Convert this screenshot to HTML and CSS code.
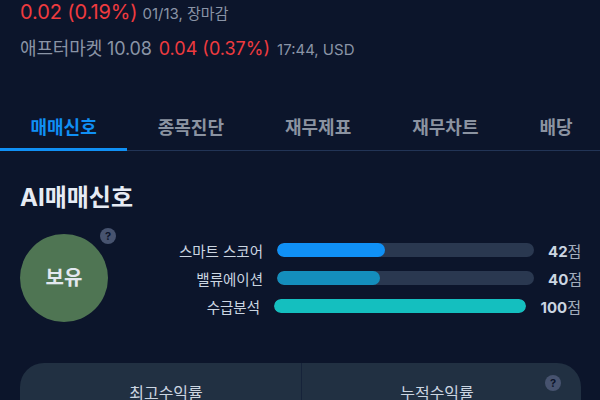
FILE: index.html
```html
<!DOCTYPE html>
<html lang="ko">

<head>
  <meta charset="UTF-8">
  <title>AI매매신호</title>
  <link rel="stylesheet" href="styles.css">
</head>

<body>
  <div class="quote">
    <div class="quote-line close">
      <span class="up big">0.02 (0.19%)</span>
      <span class="meta">01/13, 장마감</span>
    </div>
    <div class="quote-line after">
      <span class="after-label">애프터마켓 10.08</span>
      <span class="up">0.04 (0.37%)</span>
      <span class="meta">17:44, USD</span>
    </div>
  </div>

  <div class="tabs">
    <div class="tab active">매매신호</div>
    <div class="tab">종목진단</div>
    <div class="tab">재무제표</div>
    <div class="tab">재무차트</div>
    <div class="tab">배당</div>
  </div>

  <div class="section">
    <h2>AI매매신호</h2>
    <div class="signal">
      <div class="badge">
        보유
        <span class="help help-badge">?</span>
      </div>
      <div class="scores">
        <div class="score-row">
          <span class="score-label">스마트 스코어</span>
          <div class="track"><div class="fill fill-blue" style="width: 42%"></div></div>
          <span class="score-value"><strong>42</strong>점</span>
        </div>
        <div class="score-row">
          <span class="score-label">밸류에이션</span>
          <div class="track"><div class="fill fill-sky" style="width: 40%"></div></div>
          <span class="score-value"><strong>40</strong>점</span>
        </div>
        <div class="score-row wide">
          <span class="score-label">수급분석</span>
          <div class="track"><div class="fill fill-teal" style="width: 100%"></div></div>
          <span class="score-value"><strong>100</strong>점</span>
        </div>
      </div>
    </div>

    <div class="returns">
      <div class="return-cell best">최고수익률</div>
      <div class="return-cell total">
        누적수익률
        <span class="help help-card">?</span>
      </div>
    </div>
  </div>
</body>

</html>
```

FILE: styles.css
```css
* {
  margin: 0;
  padding: 0;
  box-sizing: border-box;
}

html,
body {
  height: 400px;
  overflow: hidden;
}

body {
  font-family: Inter, "Noto Sans CJK KR", sans-serif;
  background: #0c152b;
  color: #e2e8f0;
}

/* quote header */

.quote {
  height: 114px;
  padding-left: 20px;
}

.quote-line {
  display: flex;
  align-items: baseline;
  gap: 7px;
  height: 24px;
  line-height: 24px;
}

.quote-line.close {
  gap: 5px;
}

.quote-line.after {
  margin-top: 13px;
  font-size: 18px;
}

.up {
  color: #ef3b3f;
}

.big {
  font-size: 20px;
  letter-spacing: -0.1px;
}

.meta {
  font-size: 15px;
  color: #8a94a6;
}

.after-label {
  color: #8a94a6;
  letter-spacing: -0.15px;
}

/* tabs */

.tabs {
  display: flex;
  height: 37px;
  border-bottom: 1px solid #223456;
}

.tab {
  padding: 0 30.5px;
  height: 37px;
  line-height: 28px;
  font-size: 18px;
  font-weight: 700;
  color: #8b93a1;
  white-space: nowrap;
}

.tab.active {
  color: #1090f5;
  border-bottom: 3px solid #1090f5;
}

/* signal */

.section {
  padding: 32px 19px 0 20px;
}

h2 {
  font-size: 24px;
  line-height: 30px;
  font-weight: 700;
  color: #e6ebf4;
}

.signal {
  display: flex;
  margin-top: 21px;
}

.badge {
  position: relative;
  flex: none;
  width: 88px;
  height: 88px;
  border-radius: 50%;
  background: #4f7553;
  font-size: 20px;
  font-weight: 700;
  line-height: 88px;
  text-align: center;
}

.help {
  position: absolute;
  width: 16px;
  height: 16px;
  border-radius: 50%;
  background: #47536f;
  color: #0c152b;
  font-size: 11px;
  font-weight: 700;
  line-height: 16px;
  text-align: center;
}

.help-badge {
  top: -6px;
  right: -8px;
}

.scores {
  flex: 1;
  display: flex;
  flex-direction: column;
  gap: 14px;
  padding-top: 9px;
}

.score-row {
  display: flex;
  align-items: center;
  height: 14px;
  font-size: 15px;
}

.score-label {
  flex: none;
  width: 155px;
  font-size: 14.5px;
  text-align: right;
  color: #cbd5e1;
  white-space: nowrap;
}

.track {
  flex: 1;
  height: 14px;
  margin: 0 14px;
  border-radius: 7px;
  background: #2a3850;
  overflow: hidden;
}

.fill {
  height: 100%;
  border-radius: 7px;
}

.fill-blue {
  background: #1090f5;
}

.fill-sky {
  background: #148ebc;
}

.fill-teal {
  background: #14bfbf;
}

.score-value {
  flex: none;
  width: 33px;
  text-align: right;
  color: #a3adbd;
  white-space: nowrap;
}

.score-value strong {
  color: #cbd5e1;
  font-weight: 700;
}

.wide .score-label {
  width: 152px;
}

.wide .score-value {
  width: 41px;
}

/* returns card */

.returns {
  display: flex;
  height: 120px;
  margin-top: 41px;
  border-radius: 24px;
  background: #213042;
  overflow: hidden;
}

.return-cell {
  position: relative;
  flex: 1;
  padding-top: 18px;
  font-size: 16px;
  line-height: 24px;
  text-align: center;
  color: #cbd5e1;
}

.return-cell.best {
  padding-left: 11px;
}

.return-cell.total {
  padding-right: 9px;
  border-left: 1px solid #16233a;
}

.help-card {
  top: 12px;
  right: 20px;
}
```
